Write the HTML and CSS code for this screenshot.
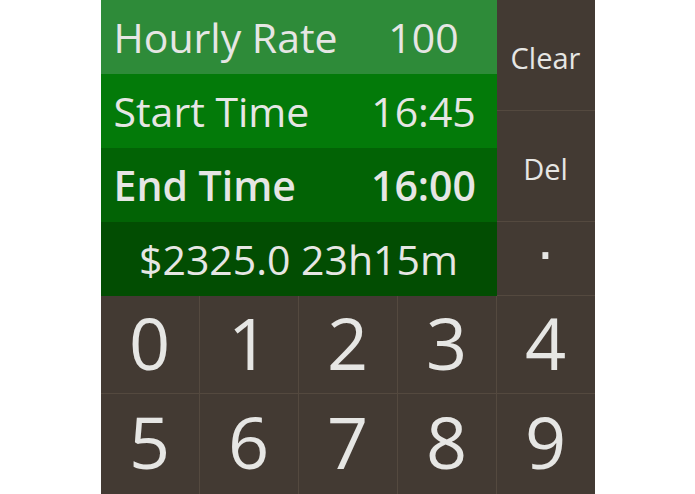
FILE: index.html
```html
<!DOCTYPE html>
<html lang="en">
<head>
  <meta charset="UTF-8" />
  <meta name="viewport" content="width=device-width, initial-scale=1.0"/>
  <title>Hourly Calc</title>
  <link rel="stylesheet" href="styles.css">
</head>
<body>
  <div class="calc">
    <div class="top">
      <div class="fields">
        <div class="row rate"><span class="label">Hourly Rate</span><span class="value">100</span></div>
        <div class="row start"><span class="label">Start Time</span><span class="value">16:45</span></div>
        <div class="row end active"><span class="label">End Time</span><span class="value">16:00</span></div>
        <div class="row total">$2325.0 23h15m</div>
      </div>
      <div class="side">
        <button class="key small">Clear</button>
        <button class="key small">Del</button>
        <button class="key dot">·</button>
      </div>
    </div>
    <div class="pad">
      <button class="key">0</button>
      <button class="key">1</button>
      <button class="key">2</button>
      <button class="key">3</button>
      <button class="key">4</button>
      <button class="key">5</button>
      <button class="key">6</button>
      <button class="key">7</button>
      <button class="key">8</button>
      <button class="key">9</button>
    </div>
  </div>
</body>
</html>
```

FILE: styles.css
```css
* { margin: 0; padding: 0; box-sizing: border-box; }
body {
  font-family: 'Open Sans', 'Noto Sans', sans-serif;
  background: #fff;
  color: #e6e6e4;
}
.calc {
  width: 494px; height: 494px; margin: 0 auto;
  display: flex; flex-direction: column;
  background: #54493f;
}
.top { display: flex; height: 296px; }
.fields { flex: 1; display: flex; flex-direction: column; }
.row {
  height: 74px; display: flex; align-items: center;
  font-size: 41px; line-height: 1;
}
.row .label { flex: 1; padding-left: 13px; }
.row .value { width: 146px; text-align: center; }
.rate { background: #2e8b39; }
.start { background: #037a09; }
.end { background: #026305; }
.total { background: #024d02; justify-content: center; }
.active { font-weight: 600; }

.key {
  border: none; background: #433a33; color: #e6e6e4;
  font-family: inherit; font-size: 72px; line-height: 1;
  display: flex; align-items: center; justify-content: center;
  padding-bottom: 6px;
}
.side {
  width: 98px; display: grid;
  grid-template-rows: 110px 110px 73px; gap: 1px;
  padding-bottom: 1px;
}
.key.small { font-size: 29px; padding: 4px 0 0; }
.key.dot { font-family: 'DejaVu Sans', sans-serif; font-size: 56px; padding: 0 0 6px; }
.pad {
  flex: 1; display: grid;
  grid-template-columns: repeat(5, 1fr);
  grid-template-rows: 97px 1fr; gap: 1px;
}
```
